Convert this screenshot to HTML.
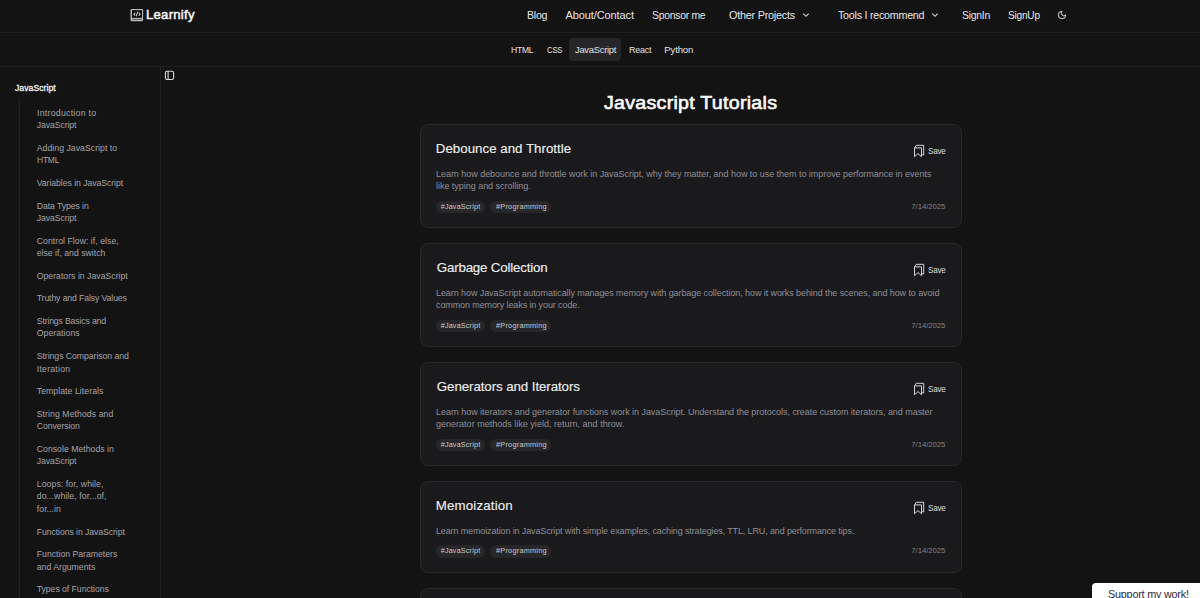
<!DOCTYPE html>
<html><head><meta charset="utf-8">
<style>
*{box-sizing:border-box;margin:0;padding:0}
html,body{width:1200px;height:598px;overflow:hidden;background:#131313;font-family:"Liberation Sans",sans-serif}
.t{position:absolute;white-space:nowrap;transform-origin:0 0}
.line{position:absolute;background:#1f1f1f}
.card{position:absolute;left:420px;width:542px;background:#1a1a1c;border:1px solid #29292c;border-radius:8px}
.tag{position:absolute;height:12.5px;border-radius:6.25px;background:#27272a}
.bm{position:absolute}
</style></head><body>
<div class="line" style="left:0;top:32px;width:1200px;height:1px"></div>
<div class="line" style="left:0;top:66px;width:1200px;height:1px"></div>
<div class="line" style="left:160px;top:67px;width:1px;height:531px"></div>
<div class="line" style="left:19px;top:100px;width:1px;height:498px;background:#232323"></div>
<div style="position:absolute;left:569px;top:38px;width:52px;height:23px;border-radius:4px;background:#262628"></div>
<svg style="position:absolute;left:129px;top:8px" width="16" height="15" viewBox="0 0 16 15">
 <rect x="1.5" y="1" width="12.6" height="12.2" rx="1.2" fill="#b9b9bb"/>
 <rect x="3" y="2.2" width="10" height="7.6" fill="#0a0a0a"/>
 <rect x="3.2" y="10.9" width="9.8" height="0.9" fill="#5a5a5c"/>
 <path d="M6.2 4.7L4.9 6.2L6.2 7.7 M9.8 4.7L11.1 6.2L9.8 7.7 M8.7 3.7L7.3 8.4" fill="none" stroke="#d8d8d8" stroke-width="1.05"/>
</svg>
<svg style="position:absolute;left:801px;top:11px" width="10" height="8" viewBox="0 0 10 8"><path d="M2.3 2.6L5 5.3L7.7 2.6" fill="none" stroke="#d4d4d8" stroke-width="1.1"/></svg>
<svg style="position:absolute;left:930px;top:11px" width="10" height="8" viewBox="0 0 10 8"><path d="M2.3 2.6L5 5.3L7.7 2.6" fill="none" stroke="#d4d4d8" stroke-width="1.1"/></svg>
<svg style="position:absolute;left:1057.2px;top:9.9px" width="10" height="10" viewBox="0 0 24 24"><path d="M12 3a6 6 0 0 0 9 9 9 9 0 1 1-9-9Z" fill="none" stroke="#e8e8ea" stroke-width="2.2" stroke-linejoin="round"/></svg>
<svg style="position:absolute;left:164px;top:70px" width="11" height="11" viewBox="0 0 11 11"><rect x="1.4" y="1.3" width="8.2" height="8.2" rx="1.6" fill="none" stroke="#d8d8da" stroke-width="1.1"/><path d="M4.1 1.3V9.5" stroke="#d8d8da" stroke-width="1.1"/></svg>
<div class="card" style="top:124px;height:104px"></div>
<div class="tag" style="left:436.2px;top:200.5px;width:48.8px"></div>
<div class="tag" style="left:490.2px;top:200.5px;width:60.8px"></div>
<svg class="bm" style="left:913px;top:144px" width="12" height="14" viewBox="0 0 12 14"><path d="M1.5 12.7V3.9H8.5V12.7L5 9.6Z M1.5 3.9L3.3 1.3H10.7V11L8.5 10.6" fill="none" stroke="#d4d4d8" stroke-width="1" stroke-linejoin="round"/></svg>
<div class="card" style="top:243px;height:104px"></div>
<div class="tag" style="left:436.2px;top:319.5px;width:48.8px"></div>
<div class="tag" style="left:490.2px;top:319.5px;width:60.8px"></div>
<svg class="bm" style="left:913px;top:263px" width="12" height="14" viewBox="0 0 12 14"><path d="M1.5 12.7V3.9H8.5V12.7L5 9.6Z M1.5 3.9L3.3 1.3H10.7V11L8.5 10.6" fill="none" stroke="#d4d4d8" stroke-width="1" stroke-linejoin="round"/></svg>
<div class="card" style="top:362px;height:104px"></div>
<div class="tag" style="left:436.2px;top:438.5px;width:48.8px"></div>
<div class="tag" style="left:490.2px;top:438.5px;width:60.8px"></div>
<svg class="bm" style="left:913px;top:382px" width="12" height="14" viewBox="0 0 12 14"><path d="M1.5 12.7V3.9H8.5V12.7L5 9.6Z M1.5 3.9L3.3 1.3H10.7V11L8.5 10.6" fill="none" stroke="#d4d4d8" stroke-width="1" stroke-linejoin="round"/></svg>
<div class="card" style="top:481px;height:92px"></div>
<div class="tag" style="left:436.2px;top:545.2px;width:48.8px"></div>
<div class="tag" style="left:490.2px;top:545.2px;width:60.8px"></div>
<svg class="bm" style="left:913px;top:501px" width="12" height="14" viewBox="0 0 12 14"><path d="M1.5 12.7V3.9H8.5V12.7L5 9.6Z M1.5 3.9L3.3 1.3H10.7V11L8.5 10.6" fill="none" stroke="#d4d4d8" stroke-width="1" stroke-linejoin="round"/></svg>
<div class="card" style="top:588px;height:60px"></div>
<div style="position:absolute;left:1092px;top:583px;width:130px;height:40px;background:#ffffff;border-radius:4px"></div>
<div class="t" style="left:146.29px;top:5.49px;font-size:13px;line-height:20px;color:#f4f4f5;letter-spacing:0.250px;transform:scaleX(1.0105);-webkit-text-stroke:0.5px #f4f4f5;">Learnify</div>
<div class="t" style="left:526.80px;top:5.19px;font-size:11px;line-height:20px;color:#e6e6e9;letter-spacing:-0.250px;transform:scaleX(0.9646);">Blog</div>
<div class="t" style="left:565.50px;top:5.19px;font-size:11px;line-height:20px;color:#e6e6e9;letter-spacing:-0.096px;">About/Contact</div>
<div class="t" style="left:651.70px;top:5.19px;font-size:11px;line-height:20px;color:#e6e6e9;letter-spacing:-0.250px;transform:scaleX(0.9396);">Sponsor me</div>
<div class="t" style="left:728.50px;top:5.19px;font-size:11px;line-height:20px;color:#e6e6e9;letter-spacing:-0.250px;transform:scaleX(0.9874);">Other Projects</div>
<div class="t" style="left:838.00px;top:5.19px;font-size:11px;line-height:20px;color:#e6e6e9;letter-spacing:-0.250px;transform:scaleX(0.9729);">Tools I recommend</div>
<div class="t" style="left:962.40px;top:5.19px;font-size:11px;line-height:20px;color:#e6e6e9;letter-spacing:-0.250px;transform:scaleX(0.9456);">SignIn</div>
<div class="t" style="left:1008.40px;top:5.19px;font-size:11px;line-height:20px;color:#e6e6e9;letter-spacing:-0.250px;transform:scaleX(0.9219);">SignUp</div>
<div class="t" style="left:511.00px;top:39.67px;font-size:9.6px;line-height:20px;color:#e2e2e5;letter-spacing:-0.250px;transform:scaleX(0.8913);">HTML</div>
<div class="t" style="left:547.00px;top:39.67px;font-size:9.6px;line-height:20px;color:#e2e2e5;letter-spacing:-0.250px;transform:scaleX(0.8073);">CSS</div>
<div class="t" style="left:574.50px;top:39.67px;font-size:9.6px;line-height:20px;color:#e2e2e5;letter-spacing:-0.250px;transform:scaleX(0.9727);">JavaScript</div>
<div class="t" style="left:628.70px;top:39.67px;font-size:9.6px;line-height:20px;color:#e2e2e5;letter-spacing:-0.250px;transform:scaleX(0.9346);">React</div>
<div class="t" style="left:664.30px;top:39.67px;font-size:9.6px;line-height:20px;color:#e2e2e5;letter-spacing:-0.166px;">Python</div>
<div class="t" style="left:15.00px;top:77.73px;font-size:8.7px;line-height:20px;color:#f0f0f2;letter-spacing:0.012px;-webkit-text-stroke:0.3px #f0f0f2;">JavaScript</div>
<div class="t" style="left:36.75px;top:102.78px;font-size:8.7px;line-height:20px;color:#a3a3ab;letter-spacing:0.250px;transform:scaleX(1.0089);">Introduction to</div>
<div class="t" style="left:36.75px;top:115.28px;font-size:8.7px;line-height:20px;color:#a3a3ab;letter-spacing:-0.100px;">JavaScript</div>
<div class="t" style="left:36.75px;top:137.88px;font-size:8.7px;line-height:20px;color:#a3a3ab;letter-spacing:0.034px;">Adding JavaScript to</div>
<div class="t" style="left:36.75px;top:150.38px;font-size:8.7px;line-height:20px;color:#a3a3ab;letter-spacing:-0.250px;transform:scaleX(0.9797);">HTML</div>
<div class="t" style="left:36.75px;top:172.98px;font-size:8.7px;line-height:20px;color:#a3a3ab;letter-spacing:-0.059px;">Variables in JavaScript</div>
<div class="t" style="left:36.75px;top:195.58px;font-size:8.7px;line-height:20px;color:#a3a3ab;letter-spacing:-0.082px;">Data Types in</div>
<div class="t" style="left:36.75px;top:208.08px;font-size:8.7px;line-height:20px;color:#a3a3ab;letter-spacing:-0.100px;">JavaScript</div>
<div class="t" style="left:36.75px;top:230.68px;font-size:8.7px;line-height:20px;color:#a3a3ab;letter-spacing:0.037px;">Control Flow: if, else,</div>
<div class="t" style="left:36.75px;top:243.18px;font-size:8.7px;line-height:20px;color:#a3a3ab;">else if, and switch</div>
<div class="t" style="left:36.75px;top:265.78px;font-size:8.7px;line-height:20px;color:#a3a3ab;letter-spacing:0.011px;">Operators in JavaScript</div>
<div class="t" style="left:36.75px;top:288.38px;font-size:8.7px;line-height:20px;color:#a3a3ab;letter-spacing:-0.116px;">Truthy and Falsy Values</div>
<div class="t" style="left:36.75px;top:310.98px;font-size:8.7px;line-height:20px;color:#a3a3ab;letter-spacing:-0.154px;">Strings Basics and</div>
<div class="t" style="left:36.75px;top:323.48px;font-size:8.7px;line-height:20px;color:#a3a3ab;letter-spacing:0.039px;">Operations</div>
<div class="t" style="left:36.75px;top:346.08px;font-size:8.7px;line-height:20px;color:#a3a3ab;letter-spacing:-0.051px;">Strings Comparison and</div>
<div class="t" style="left:36.75px;top:358.58px;font-size:8.7px;line-height:20px;color:#a3a3ab;letter-spacing:0.243px;">Iteration</div>
<div class="t" style="left:36.75px;top:381.18px;font-size:8.7px;line-height:20px;color:#a3a3ab;letter-spacing:0.061px;">Template Literals</div>
<div class="t" style="left:36.75px;top:403.78px;font-size:8.7px;line-height:20px;color:#a3a3ab;letter-spacing:0.070px;">String Methods and</div>
<div class="t" style="left:36.75px;top:416.28px;font-size:8.7px;line-height:20px;color:#a3a3ab;letter-spacing:-0.090px;">Conversion</div>
<div class="t" style="left:36.75px;top:438.88px;font-size:8.7px;line-height:20px;color:#a3a3ab;letter-spacing:0.020px;">Console Methods in</div>
<div class="t" style="left:36.75px;top:451.38px;font-size:8.7px;line-height:20px;color:#a3a3ab;letter-spacing:-0.100px;">JavaScript</div>
<div class="t" style="left:36.75px;top:473.98px;font-size:8.7px;line-height:20px;color:#a3a3ab;letter-spacing:0.089px;">Loops: for, while,</div>
<div class="t" style="left:36.75px;top:486.48px;font-size:8.7px;line-height:20px;color:#a3a3ab;letter-spacing:0.081px;">do...while, for...of,</div>
<div class="t" style="left:36.75px;top:498.98px;font-size:8.7px;line-height:20px;color:#a3a3ab;letter-spacing:0.067px;">for...in</div>
<div class="t" style="left:36.75px;top:521.58px;font-size:8.7px;line-height:20px;color:#a3a3ab;letter-spacing:-0.077px;">Functions in JavaScript</div>
<div class="t" style="left:36.75px;top:544.18px;font-size:8.7px;line-height:20px;color:#a3a3ab;letter-spacing:-0.005px;">Function Parameters</div>
<div class="t" style="left:36.75px;top:556.68px;font-size:8.7px;line-height:20px;color:#a3a3ab;letter-spacing:0.011px;">and Arguments</div>
<div class="t" style="left:36.75px;top:579.28px;font-size:8.7px;line-height:20px;color:#a3a3ab;letter-spacing:-0.045px;">Types of Functions</div>
<div class="t" style="left:604.20px;top:93.06px;font-size:18px;line-height:20px;color:#fafafa;letter-spacing:0.250px;transform:scaleX(1.0890);-webkit-text-stroke:0.6px #fafafa;">Javascript Tutorials</div>
<div class="t" style="left:435.80px;top:139.39px;font-size:13.3px;line-height:20px;color:#ececee;letter-spacing:0.016px;-webkit-text-stroke:0.15px #ececee;">Debounce and Throttle</div>
<div class="t" style="left:436.00px;top:163.88px;font-size:9px;line-height:20px;color:#8e8e97;letter-spacing:-0.037px;">Learn how debounce and throttle work in JavaScript, why they matter, and how to use them to improve performance in events</div>
<div class="t" style="left:436.00px;top:176.18px;font-size:9px;line-height:20px;color:#8e8e97;letter-spacing:-0.030px;">like typing and scrolling.</div>
<div class="t" style="left:440.70px;top:196.50px;font-size:7.2px;line-height:20px;color:#c8c8cc;letter-spacing:0.195px;">#JavaScript</div>
<div class="t" style="left:495.50px;top:196.50px;font-size:7.2px;line-height:20px;color:#c8c8cc;letter-spacing:0.250px;transform:scaleX(1.0143);">#Programming</div>
<div class="t" style="left:911.30px;top:196.60px;font-size:7.8px;line-height:20px;color:#808088;letter-spacing:-0.081px;">7/14/2025</div>
<div class="t" style="left:928.00px;top:141.12px;font-size:8.3px;line-height:20px;color:#dadade;letter-spacing:-0.250px;transform:scaleX(0.9759);">Save</div>
<div class="t" style="left:436.80px;top:258.39px;font-size:13.3px;line-height:20px;color:#ececee;letter-spacing:-0.178px;-webkit-text-stroke:0.15px #ececee;">Garbage Collection</div>
<div class="t" style="left:436.00px;top:282.88px;font-size:9px;line-height:20px;color:#8e8e97;letter-spacing:-0.081px;">Learn how JavaScript automatically manages memory with garbage collection, how it works behind the scenes, and how to avoid</div>
<div class="t" style="left:436.00px;top:295.18px;font-size:9px;line-height:20px;color:#8e8e97;letter-spacing:-0.105px;">common memory leaks in your code.</div>
<div class="t" style="left:440.70px;top:315.50px;font-size:7.2px;line-height:20px;color:#c8c8cc;letter-spacing:0.195px;">#JavaScript</div>
<div class="t" style="left:495.50px;top:315.50px;font-size:7.2px;line-height:20px;color:#c8c8cc;letter-spacing:0.250px;transform:scaleX(1.0143);">#Programming</div>
<div class="t" style="left:911.30px;top:315.60px;font-size:7.8px;line-height:20px;color:#808088;letter-spacing:-0.081px;">7/14/2025</div>
<div class="t" style="left:928.00px;top:260.12px;font-size:8.3px;line-height:20px;color:#dadade;letter-spacing:-0.250px;transform:scaleX(0.9759);">Save</div>
<div class="t" style="left:436.80px;top:377.39px;font-size:13.3px;line-height:20px;color:#ececee;letter-spacing:-0.075px;-webkit-text-stroke:0.15px #ececee;">Generators and Iterators</div>
<div class="t" style="left:436.00px;top:401.88px;font-size:9px;line-height:20px;color:#8e8e97;letter-spacing:-0.042px;">Learn how iterators and generator functions work in JavaScript. Understand the protocols, create custom iterators, and master</div>
<div class="t" style="left:436.00px;top:414.18px;font-size:9px;line-height:20px;color:#8e8e97;letter-spacing:0.013px;">generator methods like yield, return, and throw.</div>
<div class="t" style="left:440.70px;top:434.50px;font-size:7.2px;line-height:20px;color:#c8c8cc;letter-spacing:0.195px;">#JavaScript</div>
<div class="t" style="left:495.50px;top:434.50px;font-size:7.2px;line-height:20px;color:#c8c8cc;letter-spacing:0.250px;transform:scaleX(1.0143);">#Programming</div>
<div class="t" style="left:911.30px;top:434.60px;font-size:7.8px;line-height:20px;color:#808088;letter-spacing:-0.081px;">7/14/2025</div>
<div class="t" style="left:928.00px;top:379.12px;font-size:8.3px;line-height:20px;color:#dadade;letter-spacing:-0.250px;transform:scaleX(0.9759);">Save</div>
<div class="t" style="left:435.80px;top:496.39px;font-size:13.3px;line-height:20px;color:#ececee;letter-spacing:0.152px;-webkit-text-stroke:0.15px #ececee;">Memoization</div>
<div class="t" style="left:436.00px;top:520.88px;font-size:9px;line-height:20px;color:#8e8e97;letter-spacing:-0.132px;">Learn memoization in JavaScript with simple examples, caching strategies, TTL, LRU, and performance tips.</div>
<div class="t" style="left:440.70px;top:541.20px;font-size:7.2px;line-height:20px;color:#c8c8cc;letter-spacing:0.195px;">#JavaScript</div>
<div class="t" style="left:495.50px;top:541.20px;font-size:7.2px;line-height:20px;color:#c8c8cc;letter-spacing:0.250px;transform:scaleX(1.0143);">#Programming</div>
<div class="t" style="left:911.30px;top:541.30px;font-size:7.8px;line-height:20px;color:#808088;letter-spacing:-0.081px;">7/14/2025</div>
<div class="t" style="left:928.00px;top:498.12px;font-size:8.3px;line-height:20px;color:#dadade;letter-spacing:-0.250px;transform:scaleX(0.9759);">Save</div>
<div class="t" style="left:1107.80px;top:584.48px;font-size:11.6px;line-height:20px;color:#2b2d42;letter-spacing:-0.250px;transform:scaleX(0.9359);">Support my work!</div>
</body></html>
